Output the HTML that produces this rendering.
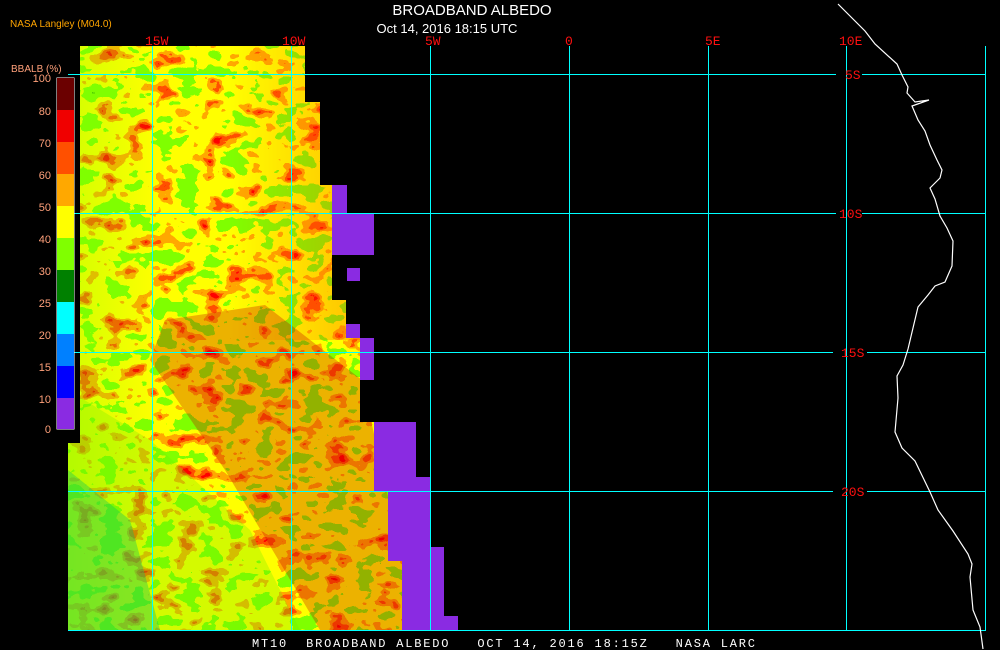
<!DOCTYPE html>
<html><head><meta charset="utf-8"><style>
html,body{margin:0;padding:0;background:#000;}
body{width:1000px;height:650px;overflow:hidden;position:relative;}
svg{position:absolute;left:0;top:0;}
text{font-family:"Liberation Sans",sans-serif;}
.m{font-family:"Liberation Mono",monospace;}
</style></head><body>
<svg width="1000" height="650" viewBox="0 0 1000 650" xmlns="http://www.w3.org/2000/svg">
<defs>
<clipPath id="data"><polygon points="80,46 305,46 305,102 320,102 320,185 332,185 332,300 346,300 346,338 360,338 360,422 374,422 374,491 388,491 388,561 402,561 402,630 68,630 68,443 80,443"/></clipPath>
<filter id="fBase" color-interpolation-filters="sRGB" filterUnits="userSpaceOnUse" x="0" y="0" width="1000" height="650">
<feTurbulence type="fractalNoise" baseFrequency="0.04 0.06" numOctaves="3" seed="3"/>
<feColorMatrix type="matrix" values="1 0 0 0 0 1 0 0 0 0 1 0 0 0 0 0 0 0 0 1"/>
<feComponentTransfer><feFuncR type="discrete" tableValues="0 .5 .5 .5 1 1 1 1 1 .42"/><feFuncG type="discrete" tableValues=".5 1 1 1 1 1 .66 .31 0 0"/><feFuncB type="discrete" tableValues="0"/><feFuncA type="linear" slope="0" intercept="1"/></feComponentTransfer>
</filter>
<linearGradient id="gl" x1="0" y1="0" x2="1" y2="0">
<stop offset="0" stop-color="#80ff00" stop-opacity=".35"/><stop offset="1" stop-color="#80ff00" stop-opacity="0"/>
</linearGradient>
<linearGradient id="gr" x1="0" y1="0" x2="1" y2="0">
<stop offset="0" stop-color="#ff5000" stop-opacity="0"/><stop offset="1" stop-color="#ff5000" stop-opacity=".35"/>
</linearGradient>
</defs>
<g clip-path="url(#data)">
<rect x="60" y="40" width="360" height="600" filter="url(#fBase)"/>
<rect x="68" y="40" width="90" height="600" fill="url(#gl)"/>
<rect x="230" y="40" width="130" height="300" fill="url(#gr)"/>
<polygon points="165,320 265,305 362,380 402,560 402,630 320,630 225,470 150,360" fill="#c00000" opacity=".3"/>
<polygon points="68,390 150,440 250,530 300,630 68,630" fill="#70f000" opacity=".3"/>
<polygon points="68,470 130,520 160,630 68,630" fill="#00c060" opacity=".35"/>
</g>
<g fill="#8a2be2">
<rect x="332" y="185" width="15" height="28"/><rect x="332" y="213" width="42" height="42"/>
<rect x="347" y="268" width="13" height="13"/><rect x="346" y="324" width="14" height="14"/>
<rect x="360" y="338" width="14" height="42"/><rect x="374" y="422" width="42" height="55"/>
<rect x="374" y="477" width="56" height="14"/><rect x="388" y="491" width="42" height="70"/>
<rect x="402" y="547" width="42" height="69"/><rect x="402" y="616" width="56" height="14"/>
</g>
<g stroke="#00ffff" stroke-width="1" fill="none" shape-rendering="crispEdges">
<line x1="152.5" y1="46" x2="152.5" y2="630"/><line x1="291.5" y1="46" x2="291.5" y2="630"/>
<line x1="430.5" y1="46" x2="430.5" y2="630"/><line x1="569.5" y1="46" x2="569.5" y2="630"/>
<line x1="708.5" y1="46" x2="708.5" y2="630"/><line x1="846.5" y1="46" x2="846.5" y2="630"/>
<line x1="985.5" y1="46" x2="985.5" y2="631"/>
<line x1="68" y1="74.5" x2="836" y2="74.5"/><line x1="862" y1="74.5" x2="986" y2="74.5"/>
<line x1="68" y1="213.5" x2="836" y2="213.5"/><line x1="862" y1="213.5" x2="986" y2="213.5"/>
<line x1="68" y1="352.5" x2="833" y2="352.5"/><line x1="867" y1="352.5" x2="986" y2="352.5"/>
<line x1="68" y1="491.5" x2="833" y2="491.5"/><line x1="867" y1="491.5" x2="986" y2="491.5"/>
<line x1="68" y1="630.5" x2="986" y2="630.5"/>
</g>
<polyline fill="none" stroke="#fff" stroke-width="1.2" points="838,4 865,31 875,44 897,64 902,75 908,87 907,93 915,102 929,100 912,106 918,120 925,131 930,145 937,160 942,170 940,178 930,188 935,199 940,216 947,228 953,241 952,266 945,282 935,286 928,295 918,307 913,328 908,349 903,365 897,376 898,398 895,432 902,448 915,461 930,492 938,510 953,531 968,554 972,564 970,577 973,610 980,627 983,649"/>
<g fill="#ff1010" font-size="13" class="m">
<text x="145" y="45" class="m">15W</text><text x="282" y="45" class="m">10W</text>
<text x="425" y="45" class="m">5W</text><text x="565" y="45" class="m">0</text>
<text x="705" y="45" class="m">5E</text><text x="839" y="45" class="m">10E</text>
<text x="845" y="79" class="m">5S</text><text x="839" y="218" class="m">10S</text>
<text x="841" y="357" class="m">15S</text><text x="841" y="496" class="m">20S</text>
</g>
<text x="472" y="15" fill="#fff" font-size="15" text-anchor="middle">BROADBAND ALBEDO</text>
<text x="447" y="33" fill="#fff" font-size="13" text-anchor="middle">Oct 14, 2016 18:15 UTC</text>
<text x="10" y="27" fill="#ffa500" font-size="10">NASA Langley (M04.0)</text>
<text x="11" y="72" fill="#ffa07a" font-size="10">BBALB (%)</text>
<g>
<rect x="56.5" y="77.5" width="18" height="352" fill="#fff"/>
<rect x="57" y="78" width="17" height="32" fill="#6b0000"/>
<rect x="57" y="110" width="17" height="32" fill="#f00000"/>
<rect x="57" y="142" width="17" height="32" fill="#ff5000"/>
<rect x="57" y="174" width="17" height="32" fill="#ffa800"/>
<rect x="57" y="206" width="17" height="32" fill="#ffff00"/>
<rect x="57" y="238" width="17" height="32" fill="#80ff00"/>
<rect x="57" y="270" width="17" height="32" fill="#008000"/>
<rect x="57" y="302" width="17" height="32" fill="#00ffff"/>
<rect x="57" y="334" width="17" height="32" fill="#0080ff"/>
<rect x="57" y="366" width="17" height="32" fill="#0000ff"/>
<rect x="57" y="398" width="17" height="31" fill="#8a2be2"/>
</g>
<g fill="#ffa07a" font-size="11" text-anchor="end">
<text x="51" y="82">100</text><text x="51" y="115">80</text><text x="51" y="147">70</text>
<text x="51" y="179">60</text><text x="51" y="211">50</text><text x="51" y="243">40</text>
<text x="51" y="275">30</text><text x="51" y="307">25</text><text x="51" y="339">20</text>
<text x="51" y="371">15</text><text x="51" y="403">10</text><text x="51" y="433">0</text>
</g>
<text x="252" y="647" fill="#fff" font-size="12" class="m" xml:space="preserve" textLength="503">MT10  BROADBAND ALBEDO   OCT 14, 2016 18:15Z   NASA LARC</text>
</svg>
</body></html>
